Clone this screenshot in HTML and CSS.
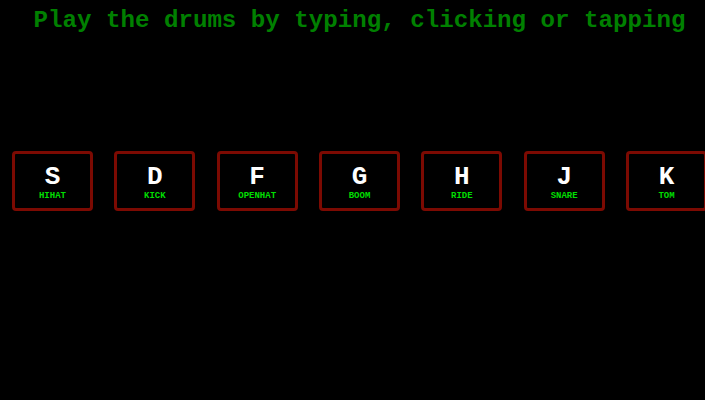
FILE: index.html
```html
<!DOCTYPE html>
<html lang="en">
<head>
<meta charset="utf-8">
<title>Drum Kit</title>
<link rel="stylesheet" href="styles.css">
</head>
<body>
<div class="page">
  <h1 class="title">Play the drums by typing, clicking or tapping</h1>
  <div class="keys">
    <div class="key"><kbd class="key-letter">S</kbd><span class="key-sound">hihat</span></div>
    <div class="key"><kbd class="key-letter">D</kbd><span class="key-sound">kick</span></div>
    <div class="key"><kbd class="key-letter">F</kbd><span class="key-sound">openhat</span></div>
    <div class="key"><kbd class="key-letter">G</kbd><span class="key-sound">boom</span></div>
    <div class="key"><kbd class="key-letter">H</kbd><span class="key-sound">ride</span></div>
    <div class="key"><kbd class="key-letter">J</kbd><span class="key-sound">snare</span></div>
    <div class="key"><kbd class="key-letter">K</kbd><span class="key-sound">tom</span></div>
  </div>
</div>
</body>
</html>
```
FILE: styles.css
```css
html {
  background: #000;
  overflow: hidden;
}
body {
  margin: 0;
  background: #000;
  font-family: "Liberation Mono", "Courier New", monospace;
}
.page {
  width: 719px;
}
.title {
  margin: 0;
  padding-top: 7px;
  font-size: 24.15px;
  font-weight: bold;
  color: #008000;
  text-align: center;
  line-height: normal;
}
.keys {
  display: flex;
  justify-content: center;
  gap: 21.35px;
  margin-top: 117px;
}
.key {
  flex: none;
  box-sizing: border-box;
  width: 81px;
  height: 60px;
  border: 3px solid #7c0a02;
  border-radius: 4px;
  display: flex;
  flex-direction: column;
  align-items: center;
  padding-top: 10px;
  background: #000;
}
.key-letter {
  font-family: "Liberation Mono", "Courier New", monospace;
  font-size: 26px;
  font-weight: bold;
  line-height: 1;
  color: #fff;
}
.key-sound {
  margin-top: 2px;
  font-size: 9px;
  line-height: 1;
  font-weight: bold;
  text-transform: uppercase;
  color: #00dd00;
}
```
